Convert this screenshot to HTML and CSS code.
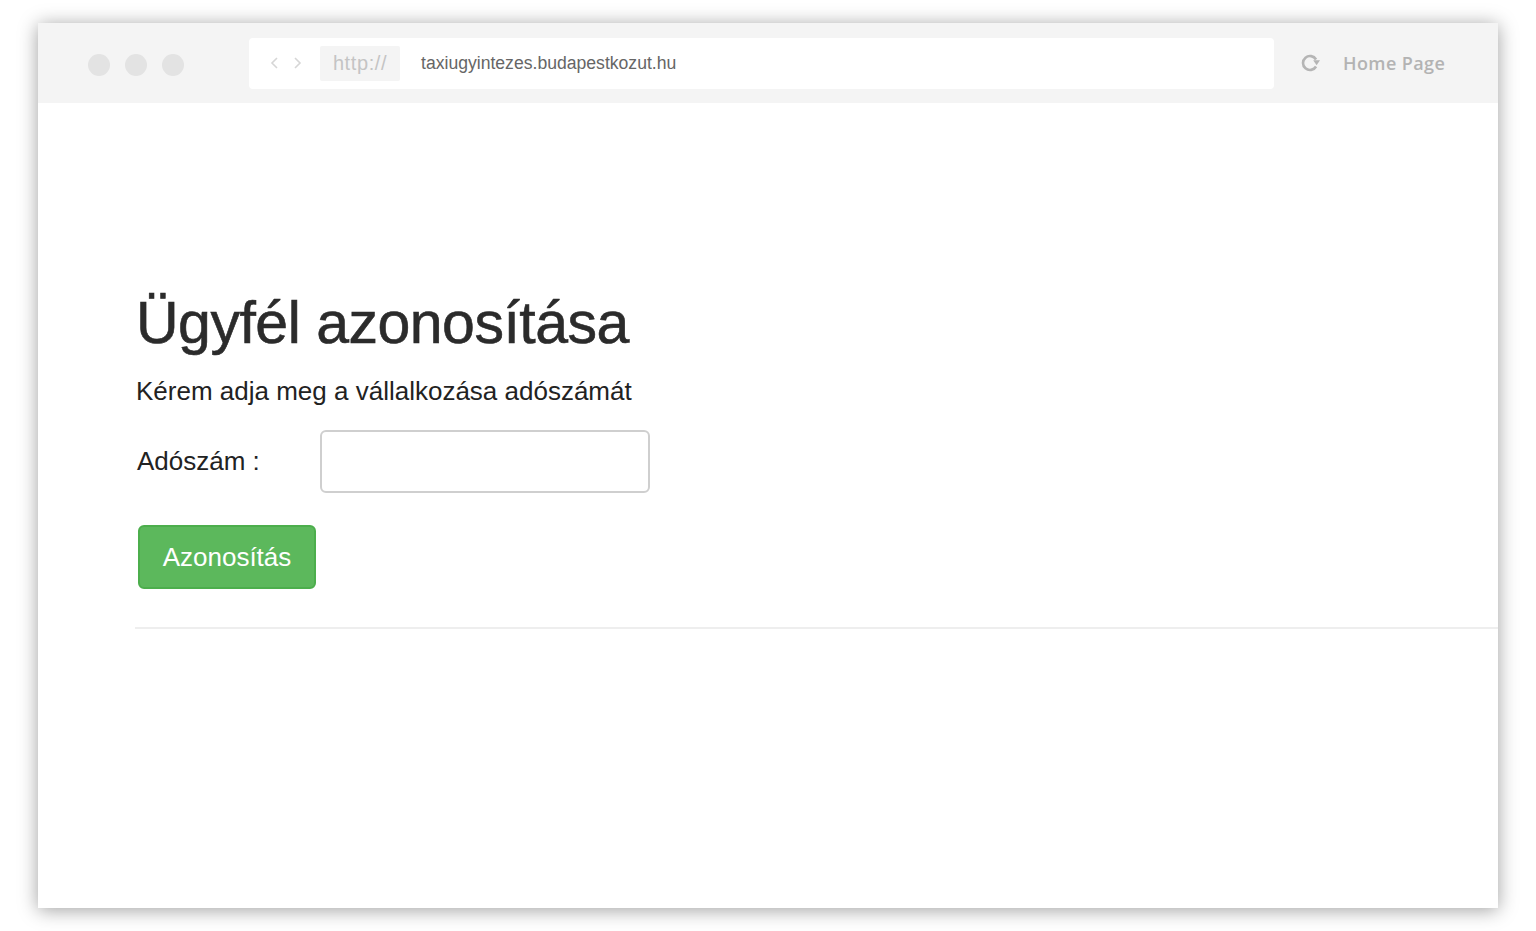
FILE: index.html
```html
<!DOCTYPE html>
<html lang="hu">
<head>
<meta charset="utf-8">
<title>Ügyfél azonosítása</title>
<link rel="stylesheet" href="styles.css">
</head>
<body>
<div class="window">
  <div class="toolbar">
    <div class="dots"><span class="dot"></span><span class="dot"></span><span class="dot"></span></div>
    <div class="urlbar">
      <div class="navs">
        <svg width="10" height="14" viewBox="0 0 10 14"><path d="M7 2 L2 7 L7 12" fill="none" stroke="#d6d6d6" stroke-width="1.6"/></svg>
        <svg width="10" height="14" viewBox="0 0 10 14"><path d="M3 2 L8 7 L3 12" fill="none" stroke="#d6d6d6" stroke-width="1.6"/></svg>
      </div>
      <div class="proto">http://</div>
      <div class="url">taxiugyintezes.budapestkozut.hu</div>
    </div>
    <div class="right">
      <svg class="reload" width="22" height="22" viewBox="0 0 22 22"><path d="M17.06 14.5 A7 7 0 1 1 17.06 7.5" fill="none" stroke="#b5b5b5" stroke-width="2.6"/><path d="M14.2 8.2 L21 8.2 L17.6 13.2 Z" fill="#b5b5b5"/></svg>
      <span class="home">Home Page</span>
    </div>
  </div>
  <div class="content">
    <h1 class="title">Ügyfél azonosítása</h1>
    <p class="lead">Kérem adja meg a vállalkozása adószámát</p>
    <div class="field">
      <label class="label" for="tax">Adószám :</label>
      <input class="input" id="tax" type="text">
    </div>
    <button class="btn" type="button">Azonosítás</button>
    <hr class="rule">
  </div>
</div>
</body>
</html>
```
FILE: styles.css
```css
html, body { margin: 0; padding: 0; background: #fff; }
body { padding: 23px 38px 23px 38px; font-family: "Liberation Sans", Arial, sans-serif; }
.window {
  width: 1460px;
  height: 885px;
  background: #fff;
  box-shadow: 0 2px 18px rgba(0,0,0,0.38);
  display: flex;
  flex-direction: column;
}
.toolbar {
  height: 80px;
  background: #f4f4f4;
  display: flex;
  align-items: center;
  box-sizing: border-box;
  padding-left: 50px;
}
.dots { display: flex; gap: 15px; margin-top: 4px; }
.dot { width: 22px; height: 22px; border-radius: 50%; background: #e3e3e3; display: block; }
.urlbar {
  margin-left: 65px;
  width: 1025px;
  height: 51px;
  background: #fff;
  border-radius: 4px;
  display: flex;
  align-items: center;
  box-sizing: border-box;
  padding-left: 21px;
}
.navs { display: flex; gap: 12px; align-items: center; }
.proto {
  margin-left: 18px;
  width: 80px;
  height: 35px;
  background: #f4f4f4;
  border-radius: 2px;
  color: #c4c4c4;
  font-size: 20px;
  letter-spacing: 0.6px;
  display: flex;
  align-items: center;
  justify-content: center;
}
.url { margin-left: 21px; color: #666; font-size: 17.6px; }
.right { display: flex; align-items: center; margin-left: 25px; }
.reload { display: block; }
.home {
  margin-left: 22px;
  color: #b3b3b3;
  font-family: "Open Sans", sans-serif;
  font-weight: 600;
  font-size: 18px;
  letter-spacing: 0.4px;
}
.content { padding-left: 98px; padding-top: 180px; }
.title {
  margin: 0;
  font-size: 59px;
  line-height: 80px;
  font-weight: normal;
  color: #2b2b2b;
  letter-spacing: -0.5px;
  -webkit-text-stroke: 0.6px #2b2b2b;
}
.lead { margin: 13px 0 0; font-size: 26px; line-height: 30px; color: #222; }
.field { display: flex; align-items: center; margin-top: 24px; }
.label { font-size: 26px; color: #222; width: 183px; padding-left: 1px; }
.input {
  width: 330px;
  height: 63px;
  box-sizing: border-box;
  border: 2px solid #cfcfcf;
  border-radius: 6px;
  font-size: 24px;
}
.btn {
  margin-top: 32px;
  margin-left: 2px;
  width: 178px;
  height: 64px;
  background: #5cb85c;
  border: 2px solid #4cae4c;
  border-radius: 6px;
  color: #fff;
  font-family: "Liberation Sans", Arial, sans-serif;
  font-size: 26px;
  display: block;
}
.rule { margin: 38px 0 0 -1px; border: 0; border-top: 2px solid #eee; }
```
